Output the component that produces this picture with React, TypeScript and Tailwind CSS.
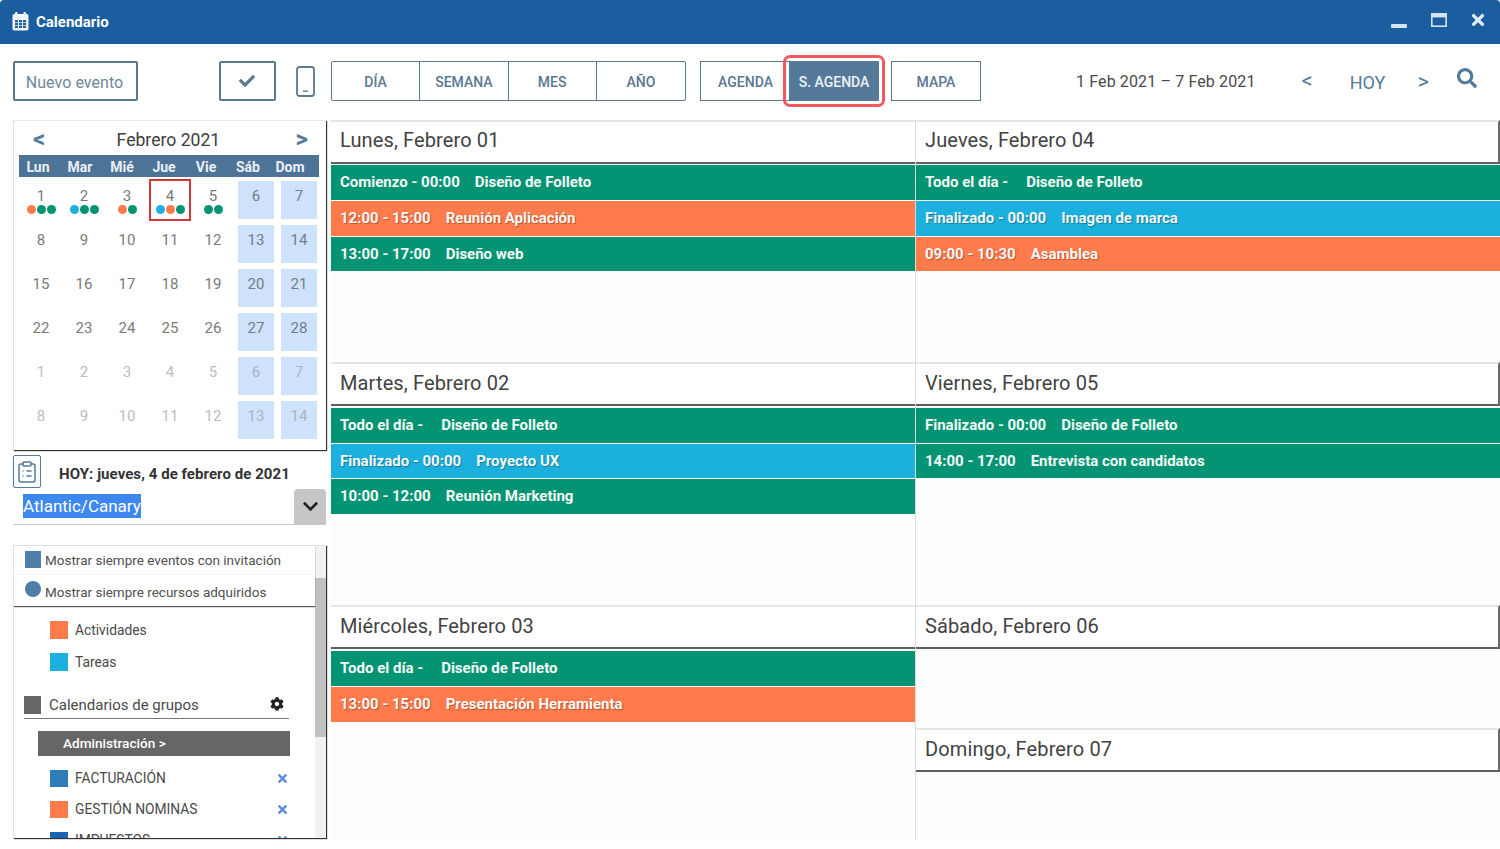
import React from "react";
import { FaCheck, FaChevronDown, FaCog, FaSearch, FaTimes } from "react-icons/fa";
import { ClipboardList } from "lucide-react";

const G = "bg-[#049474]";
const O = "bg-[#ff7b4c]";
const B = "bg-[#1cb0de]";

type Ev = { c: string; a: string; b: string; gap: string; h: string };
const ev = (c: string, a: string, b: string, h: string, gap = "ml-[15px]"): Ev => ({ c, a, b, h, gap });

function EventRow({ e }: { e: Ev }) {
  const shadow = e.c === G ? "" : "[text-shadow:1px_1px_1px_rgba(0,0,0,0.3)]";
  return (
    <div className={`${e.c} ${e.h} flex items-center pl-[9px] text-[15px] font-bold text-[#f4f8f6] mb-px ${shadow}`}>
      <span>{e.a}</span>
      <span className={e.gap}>{e.b}</span>
    </div>
  );
}

function Day({
  title,
  events,
  h,
  right,
  head = "pb-[2px]",
  body = "pt-px",
}: {
  title: string;
  events: Ev[];
  h: string;
  right?: boolean;
  head?: string;
  body?: string;
}) {
  return (
    <section className={`${h} flex flex-col overflow-hidden`}>
      <div
        className={`h-[44px] shrink-0 bg-white border-t-2 border-[#e6e6e6] border-b-2 border-b-[#5f5f5f] ${right ? "border-r-2 border-r-[#6a6a6a]" : ""} flex items-center pl-[9px] ${head} text-[20px] tracking-[0.12px] text-[#424242]`}
      >
        {title}
      </div>
      <div className={body}>
        {events.map((e, i) => (
          <EventRow key={i} e={e} />
        ))}
      </div>
    </section>
  );
}

const weekdays = ["Lun", "Mar", "Mié", "Jue", "Vie", "Sáb", "Dom"];
const rows = [
  [1, 2, 3, 4, 5, 6, 7],
  [8, 9, 10, 11, 12, 13, 14],
  [15, 16, 17, 18, 19, 20, 21],
  [22, 23, 24, 25, 26, 27, 28],
  [1, 2, 3, 4, 5, 6, 7],
  [8, 9, 10, 11, 12, 13, 14],
];
const dots: Record<number, string[]> = {
  1: [O, G, G],
  2: [B, G, G],
  3: [O, G],
  4: [B, O, G],
  5: [G, G],
};

function Cell({ n, col, row }: { n: number; col: number; row: number }) {
  const weekend = col >= 5;
  const muted = row >= 4;
  const color = muted ? (weekend ? "text-[#a9b4bf]" : "text-[#bdbdbd]") : weekend ? "text-[#6f7f8d]" : "text-[#7a7a7a]";
  const isToday = row === 0 && n === 4;
  return (
    <div className="relative h-[44px] flex justify-center">
      <div className={`w-[36px] h-[38px] mt-[2px] flex flex-col items-center ${weekend ? "bg-[#cfe2fb]" : ""}`}>
        <span className={`text-[15px] leading-[20px] mt-[5px] ml-px ${color}`}>{n}</span>
        {row === 0 && dots[n] && (
          <div className="flex gap-px -mt-[1px] ml-px">
            {dots[n].map((c, i) => (
              <span key={i} className={`w-[9px] h-[9px] rounded-full ${c}`} />
            ))}
          </div>
        )}
      </div>
      {isToday && <div className="absolute left-[1px] top-0 w-[42px] h-[42px] border-2 border-[#d8353a]" />}
    </div>
  );
}

function Swatch({ c, label, x, h = "h-[31px]", sw = "h-[18px]" }: { c: string; label: string; x?: boolean; h?: string; sw?: string }) {
  return (
    <div className={`flex items-center ${h} pl-[36px] pr-[26px] text-[13.8px] text-[#4a4a4a]`}>
      <span className={`w-[18px] ${sw} ${c} mr-[7px]`} />
      <span>{label}</span>
      {x && <FaTimes className="ml-auto text-[13px] text-[#5b8bdc]" />}
    </div>
  );
}

const tabBase = "flex items-center justify-center h-full pt-[2px] text-[14px] font-medium text-[#5a7890]";

export default function App() {
  return (
    <div className="w-[1500px] h-[849px] bg-white overflow-hidden font-['Roboto',sans-serif]">
      {/* Title bar */}
      <header className="h-[44px] bg-[#1a5ea0] rounded-t-[4px] flex items-center pl-[12px] pr-[13px] text-white">
        <svg width="17" height="19" viewBox="0 0 17 19" className="mr-[7px] -mt-[1px]">
          <rect x="3" y="0" width="2.6" height="4" rx="1" fill="#f2f6fa" />
          <rect x="11.4" y="0" width="2.6" height="4" rx="1" fill="#f2f6fa" />
          <rect x="0.5" y="2" width="16" height="16.5" rx="1.8" fill="#f2f6fa" />
          {[3, 7, 11].map((x) =>
            [8, 10.9, 13.8].map((y) => <rect key={`${x}-${y}`} x={x} y={y} width="3" height="2.2" fill="#1f619f" />),
          )}
        </svg>
        <span className="text-[15px] font-bold">Calendario</span>
        <div className="ml-auto flex items-center">
          <span className="w-[16px] h-[4px] bg-[#d5e2ef] rounded-[1px] mt-[7px]" />
          <svg width="16" height="14" viewBox="0 0 16 14" className="ml-[24px] -mt-[4px]">
            <rect x="0.8" y="0.8" width="14.4" height="12.4" fill="none" stroke="#d5e2ef" strokeWidth="1.6" />
            <rect x="0.8" y="0.8" width="14.4" height="3.6" fill="#d5e2ef" />
          </svg>
          <FaTimes className="ml-[22px] -mt-[4px] text-[18px] text-[#e4edf5]" />
        </div>
      </header>

      {/* Toolbar */}
      <div className="h-[76px] flex items-center pl-[13px] pb-[2px]">
        <button className="w-[125px] h-[40px] pt-[3px] pr-[2px] border-2 border-[#5a7890] rounded-[2px] text-[16px] tracking-[0.05px] text-[#6f8799]">Nuevo evento</button>
        <button className="ml-[81px] w-[57px] h-[40px] pr-[2px] border-2 border-[#5a7890] rounded-[2px] flex items-center justify-center text-[#5a7890] text-[16px]">
          <FaCheck />
        </button>
        <svg width="19" height="31" viewBox="0 0 19 31" className="ml-[21px] shrink-0 -translate-x-px">
          <rect x="1" y="1" width="17" height="29" rx="2.5" fill="none" stroke="#5a7890" strokeWidth="1.8" />
          <rect x="7" y="24.5" width="5" height="1.4" fill="#5a7890" />
        </svg>
        <div className="ml-[15px] w-[355px] h-[40px] grid grid-cols-4 border border-[#5a7890] rounded-[2px] divide-x divide-[#5a7890]">
          <span className={tabBase}>DÍA</span>
          <span className={tabBase}>SEMANA</span>
          <span className={tabBase}>MES</span>
          <span className={tabBase}>AÑO</span>
        </div>
        <div className="ml-[14px] w-[90px] h-[40px] pt-[2px] border-y border-l border-[#5a7890] flex items-center justify-center text-[14px] font-medium text-[#5a7890]">AGENDA</div>
        <div className="w-[90px] h-[40px] pt-[2px] -ml-px bg-[#557a99] outline-[3px] outline-offset-[3px] outline-[#ec5a5e] rounded-[1px] relative flex items-center justify-center text-[14px] font-medium text-[#eef3f7]">S. AGENDA</div>
        <div className="ml-[12px] w-[90px] h-[40px] pt-[2px] border border-[#5a7890] flex items-center justify-center text-[14px] font-medium text-[#5a7890]">MAPA</div>
        <span className="ml-[95px] mt-[1px] text-[16px] tracking-[0.13px] text-[#4a4a4a]">1 Feb 2021 – 7 Feb 2021</span>
        <span className="ml-[46px] text-[22px] text-[#557a99] -mt-[2px]">&lt;</span>
        <span className="ml-[37px] text-[18px] text-[#557a99] mt-[2px]">HOY</span>
        <span className="ml-[32px] text-[22px] text-[#557a99] mt-[1px]">&gt;</span>
        <FaSearch className="ml-[28px] text-[20px] text-[#557a99] -mt-[6px]" />
      </div>

      {/* Body */}
      <div className="flex">
        {/* Sidebar */}
        <aside className="w-[313px] ml-[13px] shrink-0">
          <div className="h-[330px] border-t border-t-[#e6e6e6] border-l border-l-[#e0e0e0] shadow-[1px_1px_1px_#333] pl-[5px] pt-px">
            <div className="flex items-center justify-between h-[33px] pl-[14px] pr-[18px] text-[#3d3d3d]">
              <span className="text-[24px] font-bold text-[#557a99] leading-none mt-px">&lt;</span>
              <span className="text-[17.6px] -ml-[4px] mt-[3px]">Febrero 2021</span>
              <span className="text-[24px] font-bold text-[#557a99] leading-none mt-px">&gt;</span>
            </div>
            <div className="w-[300px] h-[22px] bg-[#4d7496] mb-[2px] pt-[3px]">
              <div className="w-[294px] -ml-[2px] grid grid-cols-7 text-[14px] leading-[19px] font-bold text-[#eaf0f5] text-center">
                {weekdays.map((d) => (
                  <span key={d}>{d}</span>
                ))}
              </div>
            </div>
            <div className="w-[301px] grid grid-cols-7">
              {rows.map((r, ri) => r.map((n, ci) => <Cell key={`${ri}-${ci}`} n={n} col={ci} row={ri} />))}
            </div>
          </div>

          <div className="flex items-start mt-[5px] h-[34px]">
            <div className="w-[28px] h-[33px] border border-[#557a99] rounded-[2px] flex items-center justify-center text-[#557a99]">
              <ClipboardList size={24} strokeWidth={1.5} />
            </div>
            <span className="ml-[18px] mt-[9px] text-[15px] tracking-[0.06px] leading-[20px] font-bold text-[#333]">HOY: jueves, 4 de febrero de 2021</span>
          </div>
          <div className="h-[36px] flex border-b border-[#c8c8c8]">
            <span className="ml-[10px] mt-[5px] h-[24px] bg-[#3c87f0] text-white text-[17px] leading-[24px]">Atlantic/Canary</span>
            <div className="ml-auto w-[32px] h-[35px] bg-[#c6c6c6] rounded-t-[4px] flex items-center justify-center text-[#222] text-[17px]">
              <FaChevronDown />
            </div>
          </div>

          <div className="mt-[20px] h-[293px] border-t border-t-[#e0e0e0] border-l border-l-[#e0e0e0] shadow-[1px_1px_1px_#333] flex overflow-hidden">
            <div className="flex-1 min-w-0 flex flex-col">
              <div className="shadow-[0_1px_1px_#555] relative bg-white">
                <div className="h-[29px] flex items-center pl-[11px] text-[13.5px] text-[#4f4f4f] border-b border-[#f2f2f2]">
                  <span className="w-[16px] h-[17px] bg-[#4f7ea8] mr-[4px] -mt-[1px]" />
                  <span className="mt-[1px]">Mostrar siempre eventos con invitación</span>
                </div>
                <div className="h-[31px] flex items-center pl-[11px] text-[13.5px] text-[#4f4f4f]">
                  <span className="w-[16px] h-[16px] rounded-full bg-[#4f7ea8] mr-[4px] -mt-[4px]" />
                  <span className="mt-[3px]">Mostrar siempre recursos adquiridos</span>
                </div>
              </div>
              <div className="h-[2px] ml-[36px] w-[18px] bg-[#8ea9c2]" />
              <div className="pt-[8px]">
                <Swatch c="bg-[#ff7b4c]" label="Actividades" h="h-[32px]" />
                <Swatch c="bg-[#1cb0de]" label="Tareas" h="h-[32px]" />
                <div className="ml-[10px] mr-[26px] mt-[13px] h-[28px] pt-px flex items-center border-b border-[#777] text-[15px] text-[#4a4a4a]">
                  <span className="w-[17px] h-[18px] bg-[#666] mr-[8px]" />
                  <span>Calendarios de grupos</span>
                  <FaCog className="ml-auto mr-[5px] -mt-[2px] text-[14px] text-[#222]" />
                </div>
                <div className="ml-[24px] mr-[25px] mt-[12px] h-[25px] bg-[#666] text-white text-[13.6px] font-medium flex items-center pl-[25px]">Administración &gt;</div>
                <div className="mt-[7px]">
                  <Swatch c="bg-[#2e7db9]" label="FACTURACIÓN" x sw="h-[17px]" />
                  <Swatch c="bg-[#ff7b4c]" label="GESTIÓN NOMINAS" x sw="h-[17px]" />
                  <Swatch c="bg-[#1b64b4]" label="IMPUESTOS" x sw="h-[17px]" />
                </div>
              </div>
            </div>
            <div className="w-[11px] shrink-0 bg-[#f1f1f1]">
              <div className="mt-[32px] h-[159px] bg-[#c1c1c1]" />
            </div>
          </div>
        </aside>

        {/* Days */}
        <main className="ml-[5px] flex-1 h-[720px] grid grid-cols-2 gap-x-px bg-[#dcdcdc]">
          <div className="flex flex-col bg-[#fdfdfd]">
            <Day
              h="h-[242px]"
              head="pb-[4px]"
              title="Lunes, Febrero 01"
              events={[
                ev(G, "Comienzo - 00:00", "Diseño de Folleto", "h-[35px]"),
                ev(O, "12:00 - 15:00", "Reunión Aplicación", "h-[35px]"),
                ev(G, "13:00 - 17:00", "Diseño web", "h-[34px]"),
              ]}
            />
            <Day
              h="h-[243px]"
              title="Martes, Febrero 02"
              body="pt-[2px]"
              events={[
                ev(G, "Todo el día -", "Diseño de Folleto", "h-[35px]", "ml-[18px]"),
                ev(B, "Finalizado - 00:00", "Proyecto UX", "h-[34px]"),
                ev(G, "10:00 - 12:00", "Reunión Marketing", "h-[35px]"),
              ]}
            />
            <Day
              h="h-[235px]"
              title="Miércoles, Febrero 03"
              body="pt-[2px]"
              events={[
                ev(G, "Todo el día -", "Diseño de Folleto", "h-[35px]", "ml-[18px]"),
                ev(O, "13:00 - 15:00", "Presentación Herramienta", "h-[35px]"),
              ]}
            />
          </div>
          <div className="flex flex-col bg-[#fdfdfd]">
            <Day
              h="h-[242px]"
              right
              head="pb-[4px]"
              title="Jueves, Febrero 04"
              events={[
                ev(G, "Todo el día -", "Diseño de Folleto", "h-[35px]", "ml-[18px]"),
                ev(B, "Finalizado - 00:00", "Imagen de marca", "h-[35px]"),
                ev(O, "09:00 - 10:30", "Asamblea", "h-[34px]"),
              ]}
            />
            <Day
              h="h-[243px]"
              right
              title="Viernes, Febrero 05"
              body="pt-[2px]"
              events={[
                ev(G, "Finalizado - 00:00", "Diseño de Folleto", "h-[35px]"),
                ev(G, "14:00 - 17:00", "Entrevista con candidatos", "h-[34px]"),
              ]}
            />
            <Day h="h-[123px]" right title="Sábado, Febrero 06" events={[]} />
            <Day h="h-[112px]" right title="Domingo, Febrero 07" events={[]} />
          </div>
        </main>
      </div>
    </div>
  );
}
